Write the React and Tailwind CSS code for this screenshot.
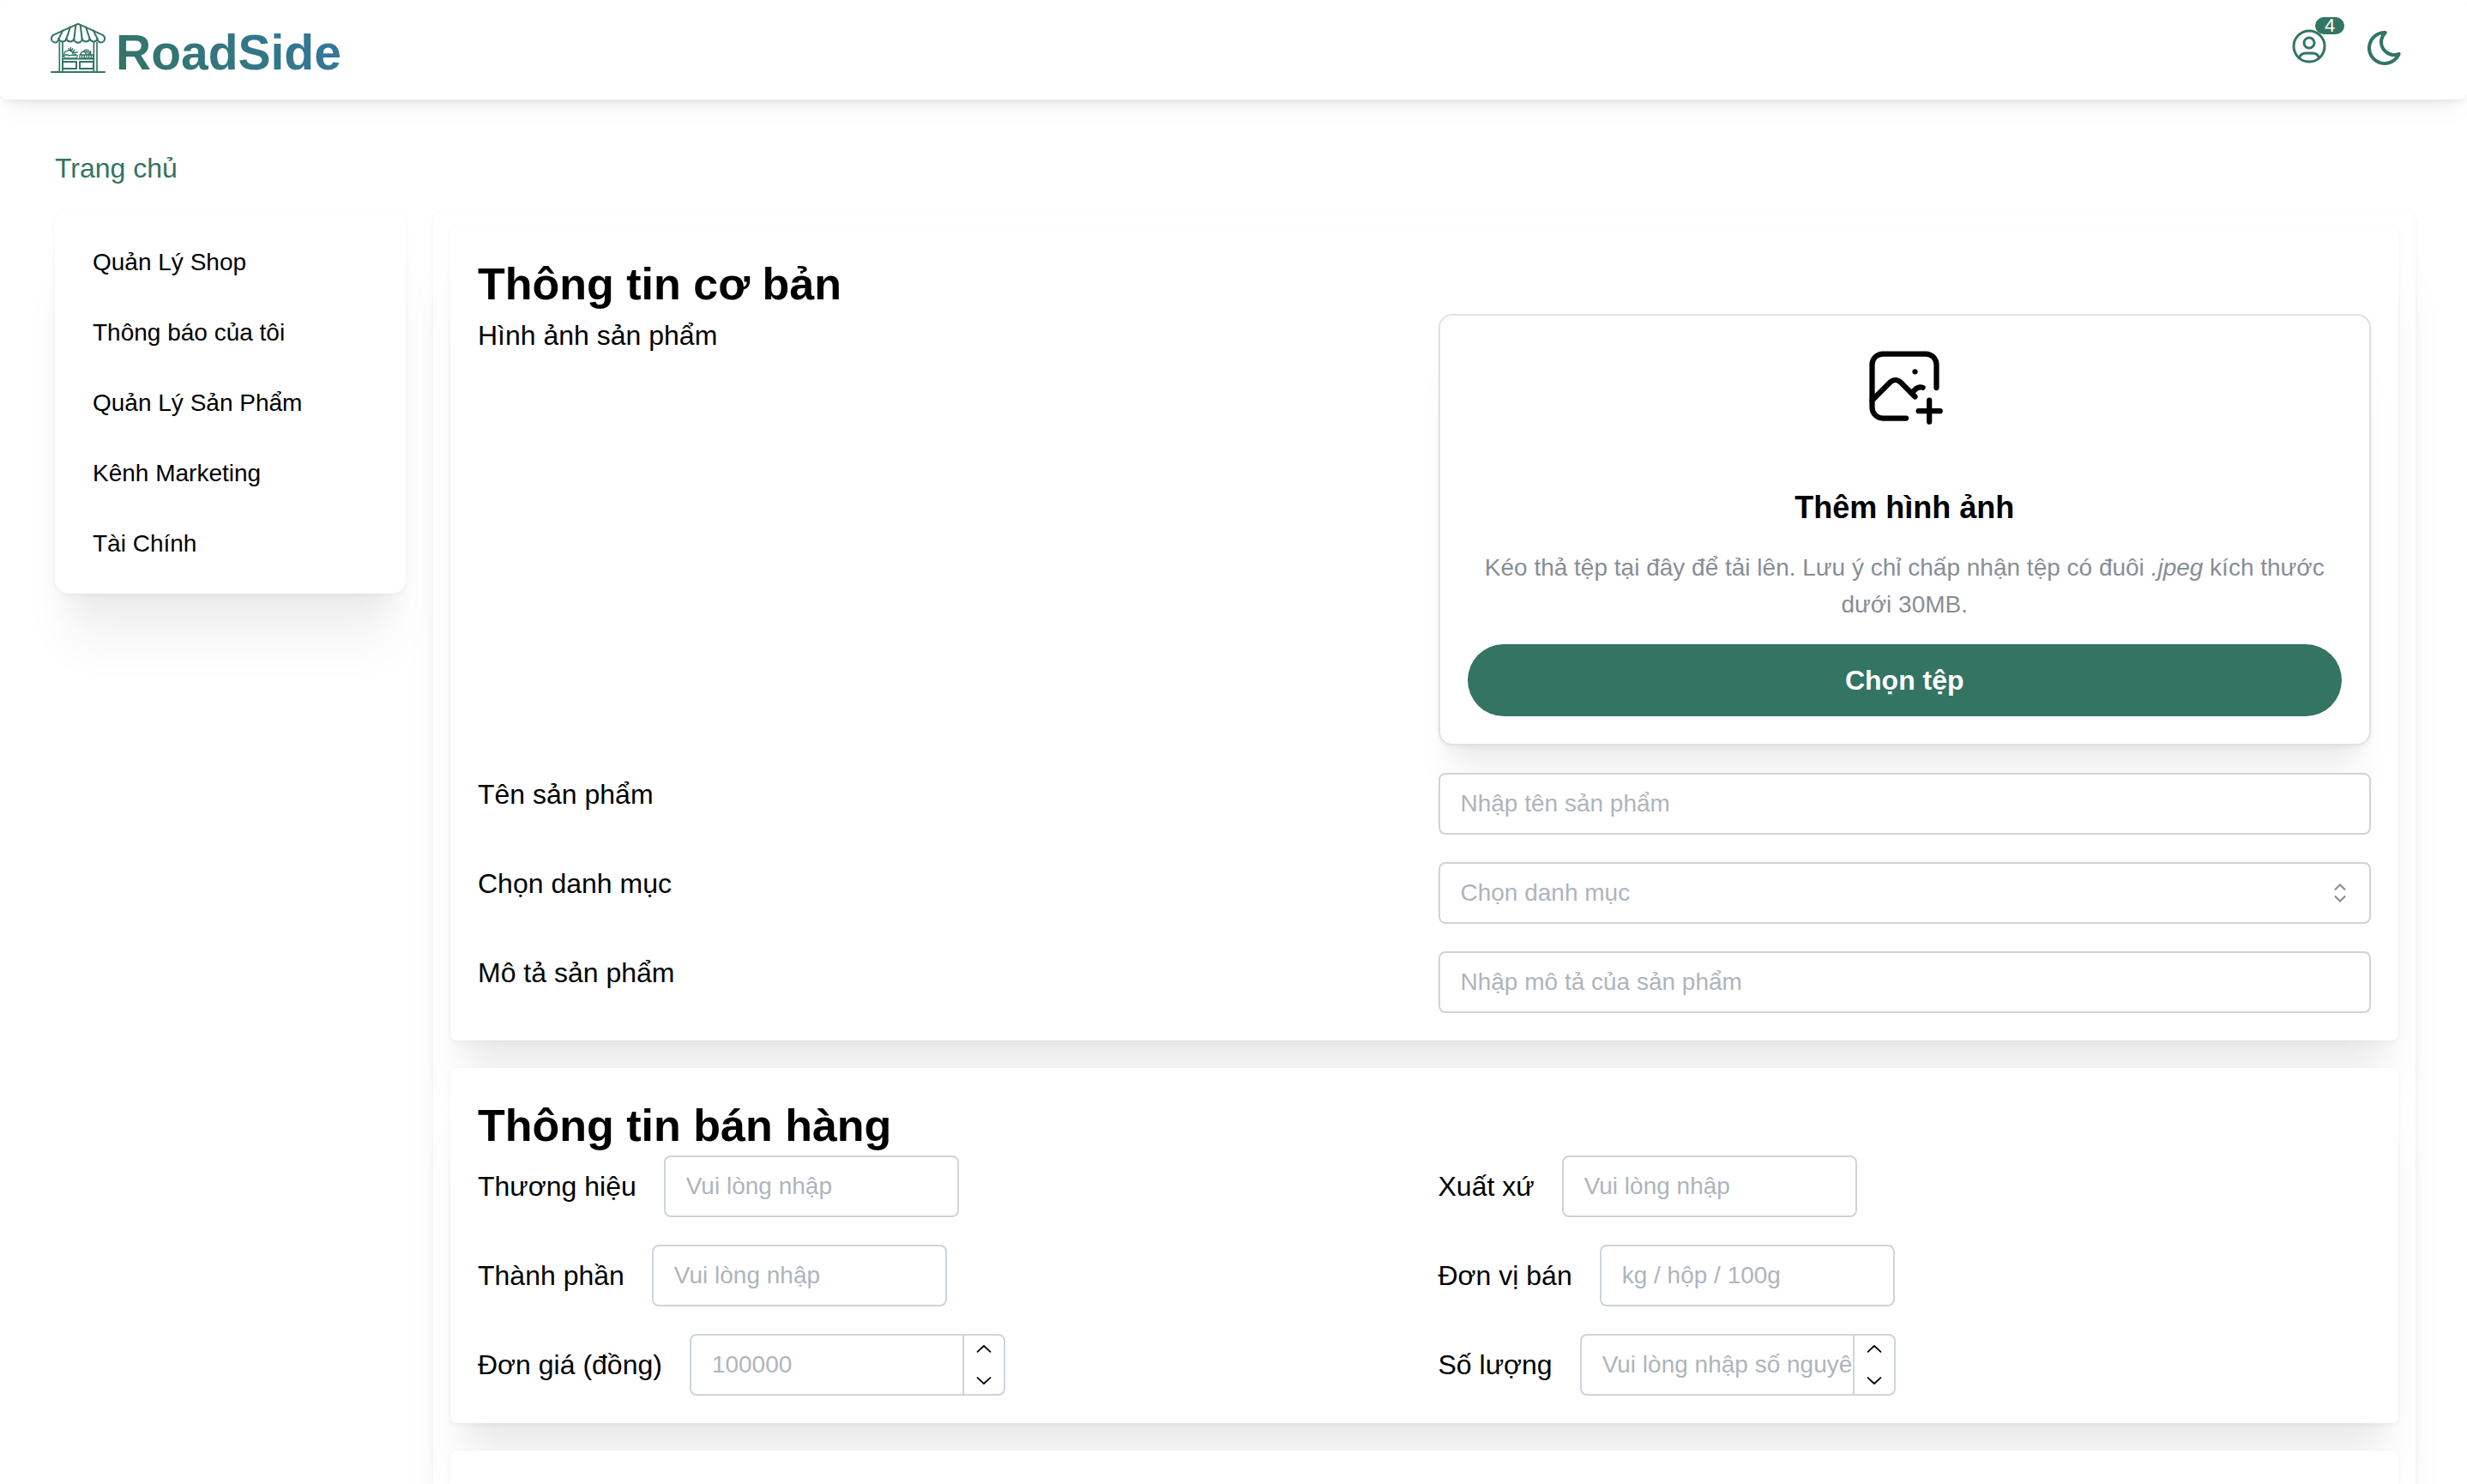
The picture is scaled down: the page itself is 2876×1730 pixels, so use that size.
import { RxChevronUp, RxChevronDown, RxCaretSort } from "react-icons/rx";

const PAPER =
  "bg-white shadow-[0_2px_6px_rgba(0,0,0,0.05),0_72px_56px_-14px_rgba(0,0,0,0.05),0_34px_34px_-14px_rgba(0,0,0,0.04)]";
const FIELD =
  "h-[72px] rounded-lg border-2 border-[#ced4da] bg-white px-6 text-[28px] placeholder:text-[#adb5bd] placeholder:opacity-100 outline-none";

function StoreLogo() {
  return (
    <svg
      viewBox="177 60 192 216"
      className="h-[72px] w-16 shrink-0"
      fill="none"
      stroke="#337463"
      strokeWidth="6"
      strokeLinecap="round"
      strokeLinejoin="round"
      aria-hidden="true"
    >
      <path d="M267 86q6-4 12 0l79 36q8 4 8 12a12 13 0 0 1-25 2a14 13 0 0 1-27 0a14 13 0 0 1-27 0a14 13 0 0 1-28 0a14 13 0 0 1-27 0a14 13 0 0 1-27 0a12 13 0 0 1-25-2q0-8 8-12z" />
      <path d="M205 136l15-30M232 136l14-42M259 136l6-48M287 136l-6-48M314 136l-14-42M341 136l-15-30" />
      <path d="M208 149v101M219 149v101M328 149v101M339 149v101" strokeWidth="5" />
      <path d="M180 252h186" />
      <path d="M219 206h109" strokeWidth="5" />
      <path d="M219 216h48v24h-48zM279 216h48v24h-48z" />
      <path
        d="M224 192h14q4 5 9 1h23q2 5-4 11h-38q-6-6-4-12zM225 188q1-10 10-9q6-7 12 0q8 0 8 10M246 178l-6-9M248 176l-1-10M251 178l3-8M257 184l14-1M256 181l5-7M260 189l8 3"
        strokeWidth="4"
      />
      <path
        d="M279 192h47v12h-47zM287 193v10M295 193v10M303 193v10M311 193v10M319 193v10M282 190q1-9 10-10q5-8 14-5q8 3 8 15M292 180q8 0 9 10M301 180q8 1 8 10M317 190v-11"
        strokeWidth="4"
      />
    </svg>
  );
}

function UserCircleIcon() {
  return (
    <svg viewBox="0 0 24 24" className="size-12" fill="none" stroke="currentColor" strokeWidth="1.5" strokeLinecap="round" strokeLinejoin="round">
      <circle cx="12" cy="12" r="9" />
      <circle cx="12" cy="10" r="3" />
      <path d="M6.168 18.849a4 4 0 0 1 3.832 -2.849h4a4 4 0 0 1 3.834 2.855" />
    </svg>
  );
}

function MoonIcon() {
  return (
    <svg viewBox="0 0 24 24" className="size-12" fill="none" stroke="currentColor" strokeWidth="2" strokeLinecap="round" strokeLinejoin="round">
      <path d="M12 3c.132 0 .263 0 .393 0a7.5 7.5 0 0 0 7.92 12.446a9 9 0 1 1 -8.313 -12.454z" />
    </svg>
  );
}

function PhotoPlusIcon() {
  return (
    <svg viewBox="0 0 24 24" className="size-[100px]" fill="none" stroke="currentColor" strokeWidth="1.5" strokeLinecap="round" strokeLinejoin="round" aria-hidden="true">
      <path d="M15 8h.01" />
      <path d="M12.5 21h-6.5a3 3 0 0 1 -3 -3v-12a3 3 0 0 1 3 -3h12a3 3 0 0 1 3 3v6.5" />
      <path d="M3 16l5 -5c.928 -.893 2.072 -.893 3 0l4 4" />
      <path d="M14 14l1 -1c.67 -.644 1.45 -.824 2.182 -.54" />
      <path d="M16 19h6" />
      <path d="M19 16v6" />
    </svg>
  );
}

function Header() {
  return (
    <header className="relative z-10 flex h-[116px] shrink-0 items-center justify-between rounded-lg bg-white pr-[72px] pb-1 pl-[59px] shadow-[0_2px_6px_rgba(0,0,0,0.05),0_20px_30px_-10px_rgba(0,0,0,0.05),0_14px_14px_-10px_rgba(0,0,0,0.04)]">
      <a href="#" className="flex items-end gap-3">
        <StoreLogo />
        <span className="bg-linear-45 from-[#337463] to-[#3577a0] bg-clip-text text-[57px] leading-[62px] font-bold text-transparent">
          RoadSide
        </span>
      </a>
      <div className="flex items-center gap-10 text-[#337463]">
        <button type="button" aria-label="Tài khoản" className="relative pb-1">
          <UserCircleIcon />
          <span className="absolute -top-2.5 left-[31px] flex h-5 w-[34px] items-center justify-center rounded-full bg-[#337463] text-[22px] leading-5 text-white">
            4
          </span>
        </button>
        <button type="button" aria-label="Chế độ tối">
          <MoonIcon />
        </button>
      </div>
    </header>
  );
}

const MENU = ["Quản Lý Shop", "Thông báo của tôi", "Quản Lý Sản Phẩm", "Kênh Marketing", "Tài Chính"];

function Sidebar() {
  return (
    <nav className={`w-[409px] shrink-0 rounded-2xl px-11 pt-[21px] pb-[17px] ${PAPER}`}>
      {MENU.map((item) => (
        <a key={item} href="#" className="block py-5 text-[28px] leading-[42px]">
          {item}
        </a>
      ))}
    </nav>
  );
}

function Card({ title, children }) {
  return (
    <section className={`rounded-lg p-8 ${PAPER}`}>
      <h2 className="text-[52px] leading-[70px] font-bold">{title}</h2>
      {children}
    </section>
  );
}

function Uploader() {
  return (
    <div className="flex flex-col items-center rounded-2xl border-2 border-[#dee2e6] bg-white p-8 text-center shadow-[0_2px_6px_rgba(0,0,0,0.05),0_56px_46px_-14px_rgba(0,0,0,0.05),0_24px_24px_-14px_rgba(0,0,0,0.04)]">
      <PhotoPlusIcon />
      <p className="mt-16 text-[36px] leading-[56px] font-bold">Thêm hình ảnh</p>
      <p className="mt-5 text-[28px] leading-[43px] text-[#868e96]">
        Kéo thả tệp tại đây để tải lên. Lưu ý chỉ chấp nhận tệp có đuôi <i>.jpeg</i> kích thước dưới 30MB.
      </p>
      <button type="button" className="mt-[25px] h-[84px] w-full rounded-full bg-[#337463] text-[32px] font-bold text-white">
        Chọn tệp
      </button>
    </div>
  );
}

function TextField({ id, label, placeholder }) {
  return (
    <div className="flex items-center gap-8">
      <label htmlFor={id}>{label}</label>
      <input id={id} type="text" placeholder={placeholder} className={`w-[344px] ${FIELD}`} />
    </div>
  );
}

function NumberField({ id, label, placeholder }) {
  return (
    <div className="flex items-center gap-8">
      <label htmlFor={id}>{label}</label>
      <div className="flex h-[72px] w-[368px] overflow-hidden rounded-lg border-2 border-[#ced4da] bg-white">
        <input
          id={id}
          type="text"
          inputMode="numeric"
          placeholder={placeholder}
          className="min-w-0 flex-1 pl-6 text-[28px] outline-none placeholder:text-[#adb5bd] placeholder:opacity-100"
        />
        <div className="flex w-12 flex-col border-l-2 border-[#ced4da]">
          <button type="button" aria-label="Tăng" className="flex flex-1 items-center justify-center">
            <RxChevronUp className="size-7" />
          </button>
          <button type="button" aria-label="Giảm" className="flex flex-1 items-center justify-center">
            <RxChevronDown className="size-7" />
          </button>
        </div>
      </div>
    </div>
  );
}

export default function App() {
  return (
    <div className="flex h-screen flex-col overflow-hidden bg-white font-['Liberation_Sans',Arial,sans-serif] text-[32px] leading-[50px] text-black">
      <Header />
      <main className="flex flex-col pt-[55px] pr-[60px] pl-16">
        <a href="#" className="self-start text-[#337463]">
          Trang chủ
        </a>
        <div className="mt-[23px] flex items-start gap-8">
          <Sidebar />
          <div className={`flex min-w-0 flex-1 flex-col gap-8 rounded-2xl p-5 ${PAPER}`}>
            <Card title="Thông tin cơ bản">
              <div className="grid grid-cols-2 gap-8">
                <p>Hình ảnh sản phẩm</p>
                <Uploader />
                <label htmlFor="name">Tên sản phẩm</label>
                <input id="name" type="text" placeholder="Nhập tên sản phẩm" className={`w-full ${FIELD}`} />
                <label htmlFor="category">Chọn danh mục</label>
                <div className="relative">
                  <select id="category" defaultValue="" className={`block w-full appearance-none text-[#adb5bd] ${FIELD}`}>
                    <option value="" disabled>
                      Chọn danh mục
                    </option>
                  </select>
                  <RxCaretSort className="pointer-events-none absolute inset-y-0 right-[18px] my-auto size-9 text-[#868e96]" />
                </div>
                <label htmlFor="description">Mô tả sản phẩm</label>
                <input id="description" type="text" placeholder="Nhập mô tả của sản phẩm" className={`w-full ${FIELD}`} />
              </div>
            </Card>
            <Card title="Thông tin bán hàng">
              <div className="grid grid-cols-2 gap-8">
                <TextField id="brand" label="Thương hiệu" placeholder="Vui lòng nhập" />
                <TextField id="origin" label="Xuất xứ" placeholder="Vui lòng nhập" />
                <TextField id="ingredients" label="Thành phần" placeholder="Vui lòng nhập" />
                <TextField id="unit" label="Đơn vị bán" placeholder="kg / hộp / 100g" />
                <NumberField id="price" label="Đơn giá (đồng)" placeholder="100000" />
                <NumberField id="quantity" label="Số lượng" placeholder="Vui lòng nhập số nguyên" />
              </div>
            </Card>
            <section className={`h-[400px] rounded-lg ${PAPER}`} />
          </div>
        </div>
      </main>
    </div>
  );
}
